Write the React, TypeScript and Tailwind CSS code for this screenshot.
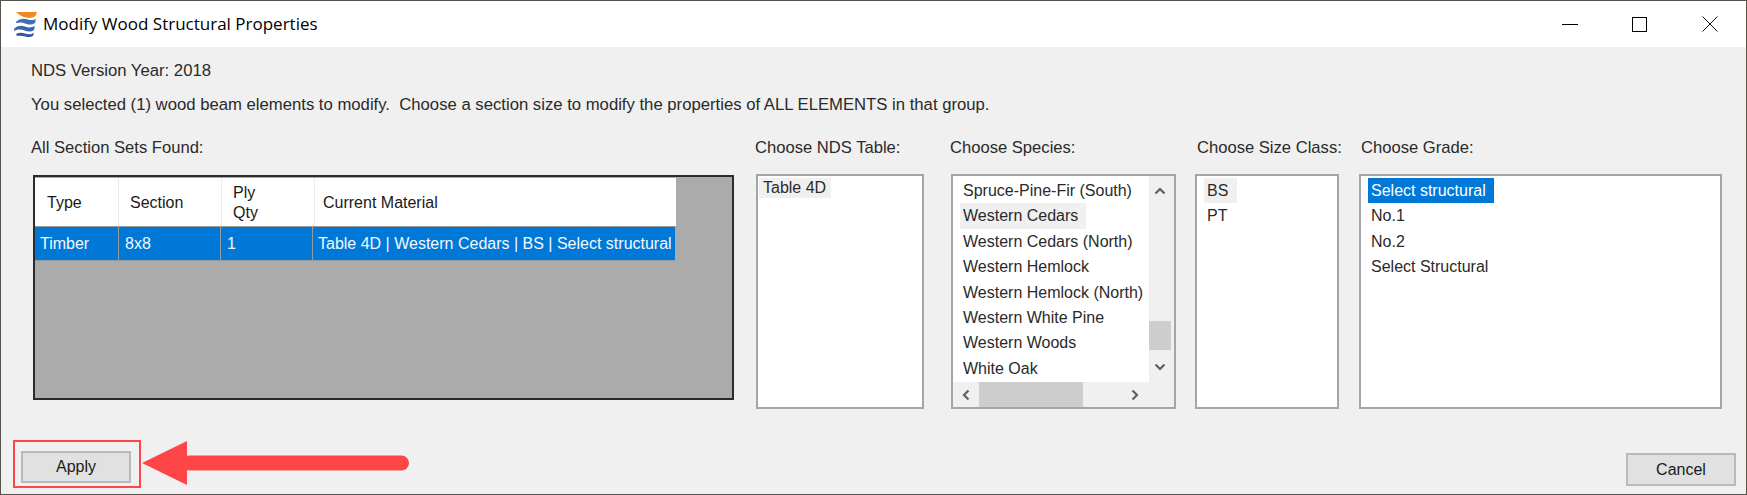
const font = "font-['Liberation_Sans',sans-serif]";

const species = [
  "Spruce-Pine-Fir (South)",
  "Western Cedars",
  "Western Cedars (North)",
  "Western Hemlock",
  "Western Hemlock (North)",
  "Western White Pine",
  "Western Woods",
  "White Oak",
];

const grades = ["No.1", "No.2", "Select Structural"];

const Logo = (): React.ReactNode => (
  <svg width="26" height="26" viewBox="0 0 26 26" className="shrink-0">
    <path d="M4 1h21l-1.500 4c-3 2-6 2.500-9.500 1.500C10 5.500 7 4 4 1z" fill="#ee8a22" />
    <path d="M4 11c3-3.500 8-4 12-2.500 3 1 6 .5 8-.5l-1 4c-3 2-7 2-10 .5-3-1.500-6-1-9-.5z" fill="#3f6fb5" />
    <path d="M2 18c3-3.500 7-4 11-2.500 4 1.500 7 1 10-.5l-1 4c-3 2-6 2-9.500.5C9 18 5 18 2 20z" fill="#3a66ad" />
    <path d="M4 23c3-1.500 6-1.500 9-.5 3 1 6 1 9-.5l-1 3c-3 1.500-5 1.500-8 .5-3-1-6-1-8-.5z" fill="#2f5a9f" />
  </svg>
);

const TableHeader = ({ label, pad }: { label: React.ReactNode; pad: string }): React.ReactNode => (
  <div className={`flex items-center bg-white text-[#1a1a1a] pt-[2px] ${pad}`}>{label}</div>
);

const TableCell = ({ label, pad }: { label: string; pad: string }): React.ReactNode => (
  <div className={`flex items-center bg-[#0078d7] text-[#f4f8fc] whitespace-nowrap pt-px ${pad}`}>{label}</div>
);

const Chevron = ({ d }: { d: string }): React.ReactNode => (
  <svg width="14" height="14" viewBox="0 0 14 14" fill="none" stroke="#606060" strokeWidth="2.2">
    <path d={d} />
  </svg>
);

const App = (): React.ReactNode => {
  return (
    <div className={`${font} w-[1747px] h-[495px] flex flex-col border border-[#55534c] text-[16.6px] text-[#2a2a2a] overflow-hidden`}>
      {/* Title bar */}
      <div className="h-[46px] shrink-0 bg-white flex items-center pl-[11px]">
        <Logo />
        <span className="ml-[5px] font-['Open_Sans',sans-serif] text-[17px] text-black whitespace-nowrap">
          Modify Wood Structural Properties
        </span>
        <div className="ml-auto flex items-center">
          <div className="w-[16px] h-px bg-black mr-[54px]" />
          <div className="w-[15px] h-[15px] border border-black mr-[55px]" />
          <svg width="16" height="16" viewBox="0 0 16 16" stroke="#111" strokeWidth="1" className="mr-[28px]">
            <path d="M.5.500l15 15M15.500.500l-15 15" />
          </svg>
        </div>
      </div>

      {/* Body */}
      <div className="flex-1 relative bg-[#f0f0f0] pt-[14px] flex flex-col">
        <div className="pl-[30px] h-[20px] leading-[20px] text-[16.7px]">NDS Version Year: 2018</div>
        <div className="pl-[30px] h-[20px] leading-[20px] mt-[14px] whitespace-nowrap text-[16.7px]">
          You selected (1) wood beam elements to modify.&nbsp; Choose a section size to modify the properties of ALL ELEMENTS in that group.
        </div>

        <div className="flex mt-[23px] h-[20px] leading-[20px] whitespace-nowrap">
          <div className="pl-[30px] w-[754px]">All Section Sets Found:</div>
          <div className="w-[195px]">Choose NDS Table:</div>
          <div className="w-[247px]">Choose Species:</div>
          <div className="w-[164px]">Choose Size Class:</div>
          <div>Choose Grade:</div>
        </div>

        <div className="flex mt-[16px] h-[235px] items-start text-[16px]">
          {/* Section sets grid */}
          <div className="ml-[32px] mt-px w-[701px] h-[225px] border-2 border-[#2b2b2b] bg-[#ababab] pt-px">
            <div className="w-[641px] grid grid-cols-[83px_102px_92px_1fr] gap-x-px bg-[#ececec] h-[48px]">
              <TableHeader label="Type" pad="pl-[12px]" />
              <TableHeader label="Section" pad="pl-[11px]" />
              <TableHeader
                label={
                  <span className="leading-[20px]">
                    Ply
                    <br />
                    Qty
                  </span>
                }
                pad="pl-[11px]"
              />
              <TableHeader label="Current Material" pad="pl-[8px]" />
            </div>
            <div className="w-[640px] grid grid-cols-[83px_101px_91px_1fr] gap-x-px bg-[#9a9a9a] h-[35px] pt-px pb-px">
              <TableCell label="Timber" pad="pl-[5px]" />
              <TableCell label="8x8" pad="pl-[6px]" />
              <TableCell label="1" pad="pl-[6px]" />
              <TableCell label="Table 4D | Western Cedars | BS | Select structural" pad="pl-[5px]" />
            </div>
          </div>

          {/* NDS table */}
          <div className="ml-[22px] w-[168px] h-[235px] border-2 border-[#a3a5a9] bg-white pl-px pt-[2px]">
            <div className="w-[72px] h-[20px] leading-[20px] bg-[#f0f0f0] pl-[4px] whitespace-nowrap">Table 4D</div>
          </div>

          {/* Species */}
          <div className="ml-[27px] w-[225px] h-[235px] border-2 border-[#a3a5a9] bg-white flex flex-col">
            <div className="flex-1 flex min-h-0">
              <div className="flex-1 pt-[2px] pl-[7px] overflow-hidden">
                {species.map((s, i) => (
                  <div
                    key={s}
                    className={`h-[25.4px] leading-[26px] pl-[3px] whitespace-nowrap ${i === 1 ? "w-[126px] bg-[#f0f0f0]" : ""}`}
                  >
                    {s}
                  </div>
                ))}
              </div>
              <div className="w-[25px] bg-[#f0f0f0] flex flex-col pt-[8px]">
                <div className="pl-[4px]">
                  <Chevron d="M2.500 9.500L7 5l4.500 4.500" />
                </div>
                <div className="w-[22px] h-[29px] bg-[#cdcdcd] mt-[123px]" />
                <div className="pl-[4px] mt-[10px]">
                  <Chevron d="M2.500 4.500L7 9l4.500-4.500" />
                </div>
              </div>
            </div>
            <div className="h-[25px] bg-[#f0f0f0] flex items-center pl-[6px] pr-[32px] shrink-0">
              <Chevron d="M9.500 2.500L5 7l4.500 4.500" />
              <div className="w-[104px] h-full bg-[#cdcdcd] ml-[6px]" />
              <div className="ml-auto">
                <Chevron d="M4.500 2.500L9 7l-4.500 4.500" />
              </div>
            </div>
          </div>

          {/* Size class */}
          <div className="ml-[19px] w-[144px] h-[235px] border-2 border-[#a3a5a9] bg-white pl-[7px] pt-[2px]">
            <div className="w-[33px] h-[25.4px] leading-[26px] bg-[#f0f0f0] pl-[3px]">BS</div>
            <div className="h-[25.4px] leading-[26px] pl-[3px]">PT</div>
          </div>

          {/* Grade */}
          <div className="ml-[20px] w-[363px] h-[235px] border-2 border-[#a3a5a9] bg-white pl-[7px] pt-[2px]">
            <div className="w-[126px] h-[25.4px] leading-[26px] bg-[#0078d7] text-white pl-[3px] whitespace-nowrap">Select structural</div>
            {grades.map((g) => (
              <div key={g} className="h-[25.4px] leading-[26px] pl-[3px]">
                {g}
              </div>
            ))}
          </div>
        </div>

        {/* Buttons */}
        <div className="flex justify-between items-start pl-[20px] pr-[10px] mt-[42px] text-[16px]">
          <button className="w-[110px] h-[32px] border-2 border-[#b9b9b9] bg-[#e1e1e1] text-[#1a1a1a]">Apply</button>
          <button className="w-[110px] h-[33px] mt-[2px] border-2 border-[#b9b9b9] bg-[#e1e1e1] text-[#1a1a1a]">Cancel</button>
        </div>

        {/* Annotation */}
        <div className="absolute left-[12px] top-[393px] w-[128px] h-[48px] border-2 border-[#ff4646]" />
        <svg width="270" height="48" viewBox="0 0 270 48" className="absolute left-[141px] top-[393px]">
          <path d="M0 23L45 1v44z" fill="#ff4646" />
          <rect x="40" y="15.500" width="227" height="15" rx="7.500" fill="#ff4646" />
        </svg>
      </div>
    </div>
  );
};

export default App;
